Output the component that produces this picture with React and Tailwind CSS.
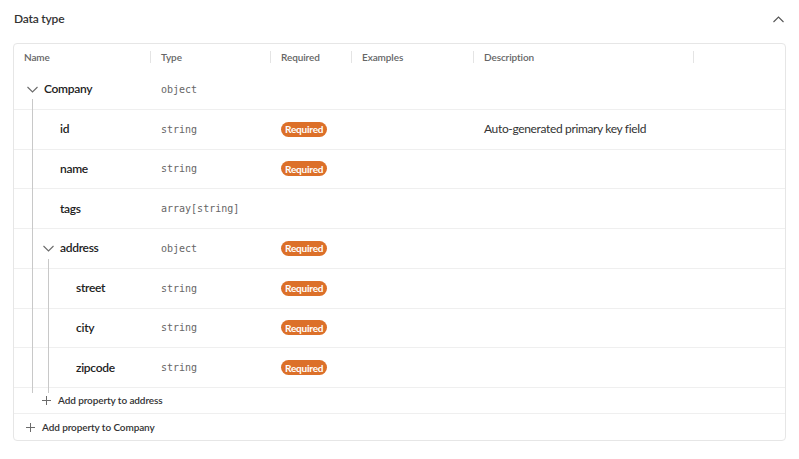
import React from "react";

const rows = [
  { name: "Company", type: "object", depth: 0, open: true, required: false, description: "" },
  { name: "id", type: "string", depth: 1, required: true, description: "Auto-generated primary key field" },
  { name: "name", type: "string", depth: 1, required: true, description: "" },
  { name: "tags", type: "array[string]", depth: 1, required: false, description: "" },
  { name: "address", type: "object", depth: 1, open: true, required: true, description: "" },
  { name: "street", type: "string", depth: 2, required: true, description: "" },
  { name: "city", type: "string", depth: 2, required: true, description: "" },
  { name: "zipcode", type: "string", depth: 2, required: true, description: "" },
];

const cols = "grid grid-cols-[137px_120px_81px_122px_220px_1fr]";

const ChevronDown = () => (
  <svg width="11" height="7" viewBox="0 0 11 7" fill="none" stroke="#6b6b6b" strokeWidth="1.1">
    <path d="M0.5 1 L5.5 6 L10.5 1" />
  </svg>
);

const Plus = () => (
  <svg width="9" height="9" viewBox="0 0 9 9" fill="none" stroke="#6b6b6b" strokeWidth="1">
    <path d="M4.5 0 V9 M0 4.5 H9" />
  </svg>
);

const Badge = () => (
  <span className="inline-flex h-[15px] items-center rounded-full bg-[#dc7029] px-[4px] text-[10px] font-bold leading-none tracking-[-0.2px] text-white">
    Required
  </span>
);

const HeaderCell = ({ children, last }) => (
  <div className="flex items-center">
    <span className="pl-[10px] text-[10px] font-semibold tracking-[-0.1px] text-[#666]">{children}</span>
    {!last && <span className="ml-auto h-[12px] w-px bg-[#e4e4e4]" />}
  </div>
);

const Row = ({ row }) => {
  const pad = row.depth * 16;
  return (
    <div className={`${cols} h-[39.75px] border-b border-[#efefef]`}>
      <div className="flex items-center pl-[10px]">
        <div style={{ width: pad }} />
        {row.open ? (
          <span className="flex w-[20px] items-center pl-[3px]">
            <ChevronDown />
          </span>
        ) : (
          <span className="w-[20px]" />
        )}
        <span className="text-[12px] font-semibold tracking-[-0.3px] text-[#222]">{row.name}</span>
      </div>
      <div className="flex items-center pl-[10px] font-['DejaVu_Sans_Mono',monospace] text-[10px] text-[#666]">
        {row.type}
      </div>
      <div className="flex items-center pl-[10px]">{row.required && <Badge />}</div>
      <div />
      <div className="flex items-center pl-[10px] text-[12px] tracking-[-0.35px] text-[#333]">{row.description}</div>
      <div />
    </div>
  );
};

export default function App() {
  return (
    <div className="h-[459px] w-[799px] bg-white font-['Lato',sans-serif]">
      <div className="flex h-[43px] items-center justify-between pl-[14px] pr-[15px] pb-[5px]">
        <span className="text-[12px] font-semibold tracking-[-0.2px] text-[#333]">Data type</span>
        <svg width="11" height="7" viewBox="0 0 11 7" fill="none" stroke="#555" strokeWidth="1.1">
          <path d="M0.5 6 L5.5 1 L10.5 6" />
        </svg>
      </div>
      <div className="relative mx-[13px] rounded-[4px] border border-[#e6e6e6]">
        <div className={`${cols} h-[26px]`}>
          <HeaderCell>Name</HeaderCell>
          <HeaderCell>Type</HeaderCell>
          <HeaderCell>Required</HeaderCell>
          <HeaderCell>Examples</HeaderCell>
          <HeaderCell>Description</HeaderCell>
          <div />
        </div>
        {rows.map((r) => (
          <Row key={r.name} row={r} />
        ))}
        <div className="flex h-[26px] items-center gap-[7px] border-b border-[#efefef] pl-[28px]">
          <Plus />
          <span className="text-[10px] font-semibold tracking-[-0.1px] text-[#333]">Add property to address</span>
        </div>
        <div className="flex h-[26px] items-center gap-[7px] pl-[12px]">
          <Plus />
          <span className="text-[10px] font-semibold tracking-[-0.1px] text-[#333]">Add property to Company</span>
        </div>
        <div className="absolute left-[18px] top-[55px] h-[294px] w-px bg-[#c8c8c8]" />
        <div className="absolute left-[34px] top-[215px] h-[134px] w-px bg-[#c8c8c8]" />
      </div>
    </div>
  );
}
